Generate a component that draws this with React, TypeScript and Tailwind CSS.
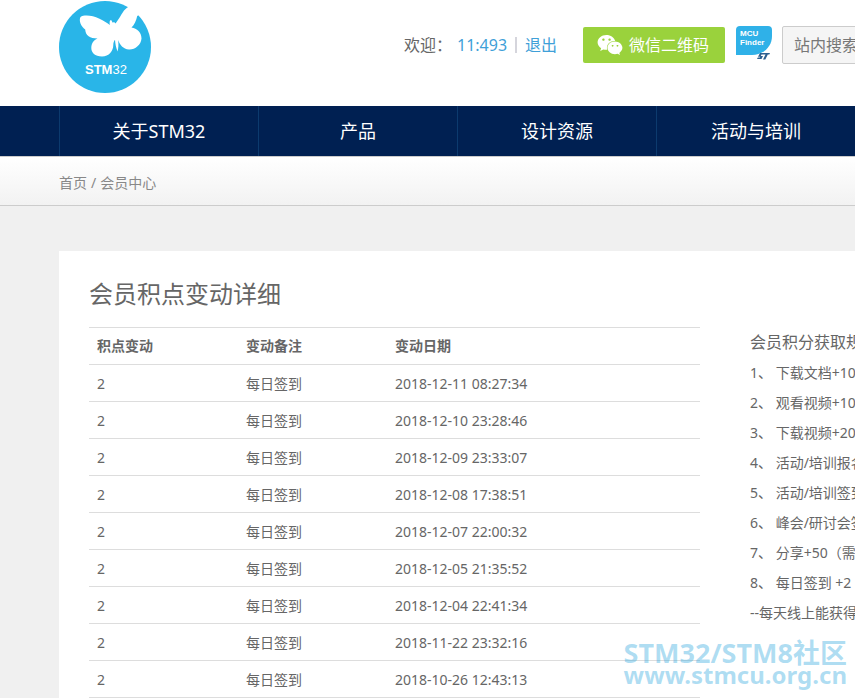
import { FaWeixin } from "react-icons/fa";

const navItems = ["关于STM32", "产品", "设计资源", "活动与培训", "视频", "社区"];

const records = [
  "2018-12-11 08:27:34",
  "2018-12-10 23:28:46",
  "2018-12-09 23:33:07",
  "2018-12-08 17:38:51",
  "2018-12-07 22:00:32",
  "2018-12-05 21:35:52",
  "2018-12-04 22:41:34",
  "2018-11-22 23:32:16",
  "2018-10-26 12:43:13",
];

const rules = [
  "1、 下载文档+10",
  "2、 观看视频+10",
  "3、 下载视频+20",
  "4、 活动/培训报名+10",
  "5、 活动/培训签到+50",
  "6、 峰会/研讨会签到+100",
  "7、 分享+50（需审核）",
  "8、 每日签到 +2",
  "--每天线上能获得的积分上限为100",
];

function Logo() {
  return (
    <svg className="h-[92px] w-[92px]" viewBox="0 0 92 92" role="img" aria-label="STM32">
      <circle cx="46" cy="46" r="46" fill="#29b5e8" />
      <path
        fill="#fff"
        d="M21.500 16C25 13.500 34 14.500 40 17.500C45 20 48.500 22 50.800 24C50.400 21.500 50.600 19 52 19C52.800 19.500 53 21 53.800 21.800C55 20.800 55.800 21.500 56.300 22.500C59 20 61.500 14.500 65 9.500C68 6 72 4 76 3L80 5L78.500 14C77 20 75.500 24 72.500 26.500C78 27.500 82.500 31 82.500 37.500C82 44 76 48.800 70 48.500C64 48 61 44 59 39C59.800 43 59.500 47 58.500 50.500C57 46.500 56.300 43 56 38.800C55 40 54.300 42 54.300 44C54.300 50 50 55.500 43 55.500C36 55.500 32 51.500 32.300 46.500C32.600 42 34.500 39.500 38.500 37.500C31 37.500 26.500 34.500 26.200 28.500C22 25.500 19.500 19.500 21.500 16Z"
      />
      <path fill="#fff" d="M73 4L77 0H88L87 10L78 15Z" />
      <text x="26" y="73" fill="#fff" fontSize="13" fontFamily="'Liberation Sans', sans-serif">
        <tspan fontWeight="700">STM</tspan>32
      </text>
    </svg>
  );
}

function McuFinder() {
  return (
    <svg className="h-9 w-9" viewBox="0 0 36 36" role="img" aria-label="MCU Finder">
      <path fill="#2fb1e8" d="M4 0H32Q36 0 36 4V10C36 21 27 29 16 29H0V4Q0 0 4 0Z" />
      <g fill="#fff" fontSize="8" fontWeight="700" fontFamily="'Liberation Sans', sans-serif">
        <text x="4" y="10">MCU</text>
        <text x="4" y="19">Finder</text>
      </g>
      <path fill="#2d5f8f" d="M24 27H34L33.300 28.500H31.800L29.300 33.500H27L29.500 28.500H25.500L24.800 30H27L25.500 33H21L21.800 31.500H23.800L24.200 30.800H22Z" />
    </svg>
  );
}

export default function App() {
  return (
    <div className="relative flex min-h-screen flex-col overflow-hidden bg-[#f0f0f0] font-['Noto_Sans','Noto_Sans_CJK_SC',sans-serif] text-sm text-[#666]">
      {/* Header */}
      <header className="flex h-[106px] min-w-[1255px] items-start bg-white pl-[59px]">
        <div className="w-[345px] pt-px">
          <Logo />
        </div>
        <div className="flex h-[90px] items-center">
          <div className="flex w-[179px] items-center text-base">
            <span className="w-[53px]">欢迎：</span>
            <a href="#" className="text-[#3fa0d8]">11:493</a>
            <span className="mx-2 h-4 w-0.5 bg-[#d5d5dc]" />
            <a href="#" className="text-[#3fa0d8]">退出</a>
          </div>
          <button className="flex h-9 w-[142px] items-center gap-1.5 rounded-xs bg-[#9ad23c] pl-3.5 text-base text-white">
            <FaWeixin className="h-7 w-[26px]" />
            微信二维码
          </button>
          <a href="#" className="mr-2.5 ml-[11px] pb-0.5">
            <McuFinder />
          </a>
          <input
            type="text"
            aria-label="站内搜索"
            placeholder="站内搜索"
            className="h-[38px] w-60 rounded-xs border border-[#ccc] bg-[#f5f5f5] px-[11px] text-base placeholder:text-[#777]"
          />
        </div>
      </header>

      {/* Main nav */}
      <nav className="min-w-[1255px] bg-[#002052] pl-[59px]">
        <ul className="flex">
          {navItems.map((item) => (
            <li key={item} className="w-[199px] border-l border-[#0c3a6e]">
              <a href="#" className="block text-center text-lg leading-[50px] text-white">
                {item}
              </a>
            </li>
          ))}
        </ul>
      </nav>

      {/* Breadcrumb */}
      <div className="flex h-[50px] items-center border-y border-[#ccc] bg-linear-to-b from-white to-[#f2f2f2] pt-1 pl-[59px] text-[#888]">
        <a href="#">首页</a>
        <span className="mx-1">/</span>
        <a href="#">会员中心</a>
      </div>

      {/* Points panel */}
      <main className="mt-[45px] ml-[59px] flex min-w-[1196px] flex-1 gap-[50px] bg-white px-[30px]">
        <section className="w-[611px] shrink-0">
          <h1 className="h-[76px] pt-[25px] text-2xl leading-9">会员积点变动详细</h1>
          <table className="w-full table-fixed border-b border-[#ddd] text-left">
            <thead>
              <tr className="h-[37px] border-t border-[#ddd]">
                <th className="w-[149px] px-2">积点变动</th>
                <th className="w-[149px] px-2">变动备注</th>
                <th className="px-2">变动日期</th>
              </tr>
            </thead>
            <tbody>
              {records.map((date) => (
                <tr key={date} className="h-[37px] border-t border-[#ddd]">
                  <td className="px-2 pt-0.5">2</td>
                  <td className="px-2 pt-0.5">每日签到</td>
                  <td className="px-2 pt-0.5">{date}</td>
                </tr>
              ))}
            </tbody>
          </table>
        </section>

        <aside className="pt-[76px] leading-[30px] whitespace-nowrap">
          <h2 className="mb-px text-base leading-[30px]">会员积分获取规则</h2>
          {rules.map((rule) => (
            <p key={rule}>{rule}</p>
          ))}
        </aside>
      </main>

      {/* Watermark */}
      <div className="pointer-events-none absolute right-2 bottom-3 text-center text-2xl leading-[22px] font-bold text-[#2aa5de]/38">
        <p className="text-[27px] leading-[22px]">STM32/STM8社区</p>
        <p>www.stmcu.org.cn</p>
      </div>
    </div>
  );
}
